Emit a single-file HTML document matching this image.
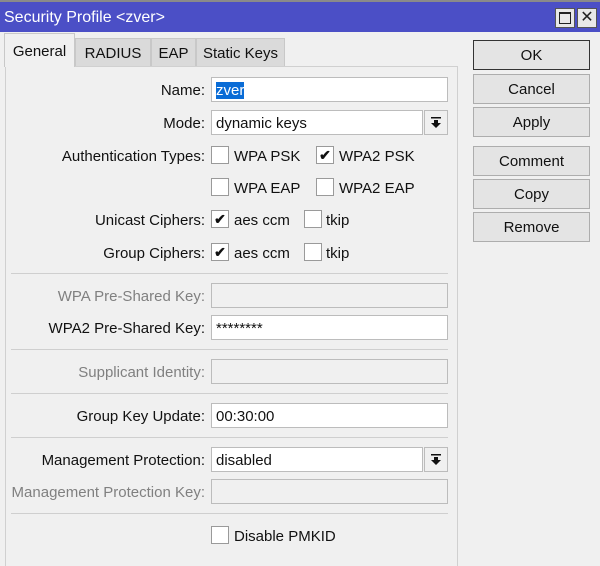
<!DOCTYPE html>
<html><head><style>
*{box-sizing:border-box;margin:0;padding:0}
body{width:600px;height:556px;background:#f0f0f0;font-family:"Liberation Sans",Arial,sans-serif;font-size:15px;color:#111;position:relative;overflow:hidden}
.a{position:absolute}
.title{left:0;top:0;width:600px;height:32px;background:#4b4fc6;border-top:2px solid #8a8a8a;color:#fff;font-size:16px;padding:7px 0 0 4px}
.wb{top:8px;width:20px;height:20px;background:#e8e8e8;border:1px solid #555;color:#222;text-align:center;font-size:16px;line-height:18px}
.tab{top:38px;height:28px;background:#dadada;border:1px solid #c8c8c8;border-bottom:none;text-align:center;padding-top:6px;font-size:15px}
.panel{left:5px;top:66px;width:453px;height:500px;border:1px solid #d0d0d0;border-bottom:none;background:#f0f0f0}
.lbl{right:395px;text-align:right;white-space:nowrap;margin-top:1px}
.g{color:#808080}
.f{left:211px;width:237px;height:25px;background:#fff;border:1px solid #bcbcbc;padding:4px 0 0 4px}
.fd{background:#f0f0f0;border-color:#bcbcbc}
.dd{left:424px;width:24px;height:25px;border:1px solid #bcbcbc;background:#f0f0f0}
.cb{width:18px;height:18px;background:#fff;border:1px solid #9a9a9a;font-size:14px;line-height:17px;text-align:center;font-weight:bold}
.t{margin-top:1px}
.sep{left:11px;width:437px;height:1px;background:#cfcfcf}
.btn{left:473px;width:117px;height:30px;border:1px solid #adadad;background:#e4e4e4;text-align:center;line-height:29px;font-size:15px}
</style></head><body>
<div class="a title">Security Profile &lt;zver&gt;</div>
<div class="a wb" style="left:555px"><div style="margin:3px auto;width:12px;height:12px;border:1px solid #222;border-top-width:2px"></div></div>
<div class="a wb" style="left:577px">✕</div>

<div class="a panel"></div>
<div class="a tab" style="left:75px;width:76px">RADIUS</div>
<div class="a tab" style="left:151px;width:45px">EAP</div>
<div class="a tab" style="left:196px;width:89px">Static Keys</div>
<div class="a tab" style="left:4px;top:33px;width:71px;height:34px;background:#f0f0f0;padding-top:9px">General</div>

<div class="a lbl" style="top:81px">Name:</div>
<div class="a f" style="top:77px"><span style="background:#0a6cd6;color:#fff">zver</span></div>
<div class="a lbl" style="top:114px">Mode:</div>
<div class="a f" style="top:110px;width:212px">dynamic keys</div>
<div class="a dd" style="top:110px"><svg width="22" height="23"><rect x="6" y="6" width="10" height="1.5" fill="#111"/><path d="M9 9h4v3h3l-5 5-5-5h3z" fill="#111"/></svg></div>

<div class="a lbl" style="top:147px">Authentication Types:</div>
<div class="a cb" style="left:211px;top:146px"></div><div class="a t" style="left:234px;top:147px">WPA PSK</div>
<div class="a cb" style="left:316px;top:146px">✔</div><div class="a t" style="left:339px;top:147px">WPA2 PSK</div>
<div class="a cb" style="left:211px;top:178px"></div><div class="a t" style="left:234px;top:179px">WPA EAP</div>
<div class="a cb" style="left:316px;top:178px"></div><div class="a t" style="left:339px;top:179px">WPA2 EAP</div>

<div class="a lbl" style="top:211px">Unicast Ciphers:</div>
<div class="a cb" style="left:211px;top:210px">✔</div><div class="a t" style="left:234px;top:211px">aes ccm</div>
<div class="a cb" style="left:304px;top:210px"></div><div class="a t" style="left:326px;top:211px">tkip</div>
<div class="a lbl" style="top:244px">Group Ciphers:</div>
<div class="a cb" style="left:211px;top:243px">✔</div><div class="a t" style="left:234px;top:244px">aes ccm</div>
<div class="a cb" style="left:304px;top:243px"></div><div class="a t" style="left:326px;top:244px">tkip</div>

<div class="a sep" style="top:273px"></div>
<div class="a lbl g" style="top:287px">WPA Pre-Shared Key:</div>
<div class="a f fd" style="top:283px"></div>
<div class="a lbl" style="top:319px">WPA2 Pre-Shared Key:</div>
<div class="a f" style="top:315px">********</div>
<div class="a sep" style="top:349px"></div>
<div class="a lbl g" style="top:363px">Supplicant Identity:</div>
<div class="a f fd" style="top:359px"></div>
<div class="a sep" style="top:393px"></div>
<div class="a lbl" style="top:407px">Group Key Update:</div>
<div class="a f" style="top:403px">00:30:00</div>
<div class="a sep" style="top:437px"></div>
<div class="a lbl" style="top:451px">Management Protection:</div>
<div class="a f" style="top:447px;width:212px">disabled</div>
<div class="a dd" style="top:447px"><svg width="22" height="23"><rect x="6" y="6" width="10" height="1.5" fill="#111"/><path d="M9 9h4v3h3l-5 5-5-5h3z" fill="#111"/></svg></div>
<div class="a lbl g" style="top:483px">Management Protection Key:</div>
<div class="a f fd" style="top:479px"></div>
<div class="a sep" style="top:513px"></div>
<div class="a cb" style="left:211px;top:526px"></div><div class="a t" style="left:234px;top:527px">Disable PMKID</div>

<div class="a btn" style="top:40px;border-color:#333">OK</div>
<div class="a btn" style="top:74px">Cancel</div>
<div class="a btn" style="top:107px">Apply</div>
<div class="a btn" style="top:146px">Comment</div>
<div class="a btn" style="top:179px">Copy</div>
<div class="a btn" style="top:212px">Remove</div>
</body></html>
